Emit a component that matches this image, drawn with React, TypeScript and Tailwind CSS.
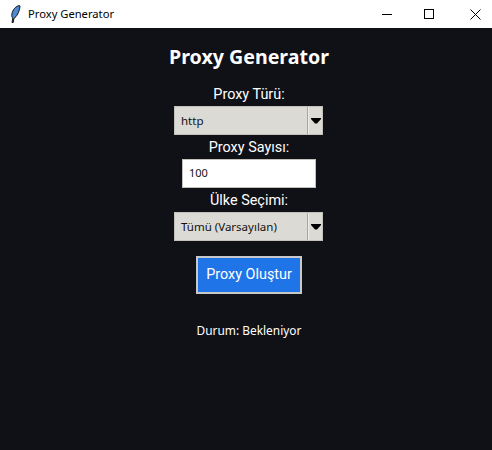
import React from "react";

function Combo({ text }: { text: string }) {
  return (
    <div className="flex h-[29px] w-[149px] border border-[#c4c1b8] bg-[#dcdad5]">
      <div className="flex flex-1 items-center border-r border-[#a9a69d] pl-[6px] text-[11.5px] text-[#111]">
        {text}
      </div>
      <div className="flex w-[14px] items-center justify-center border-l border-[#ecebe7]">
        <svg width="10" height="6" viewBox="0 0 10 6">
          <path d="M0 0H10V1L6 5.5H4L0 1Z" fill="#000" />
        </svg>
      </div>
    </div>
  );
}

export default function App() {
  return (
    <div className="flex h-[450px] w-[492px] flex-col overflow-hidden bg-[#0f1117] font-['Noto_Sans','Open_Sans',sans-serif]">
      <div className="flex h-7 shrink-0 items-center bg-white text-black">
        <svg className="ml-[10px]" width="11" height="18" viewBox="0 0 11 18">
          <path d="M9.5 0.5C6 1 2.5 4.5 1.8 9.5C1.6 11 2 12.5 2.8 13L2 17.5H3.2L4 13.2C6.5 12 9.5 7 10 1Z" fill="#4f8ad0" stroke="#111" strokeWidth="1" />
        </svg>
        <span className="ml-[7px] text-[11.2px]">Proxy Generator</span>
        <div className="ml-auto flex items-center">
          <svg className="mr-[32px]" width="10" height="10" viewBox="0 0 10 10">
            <path d="M0 5.5H10" stroke="#000" strokeWidth="1" />
          </svg>
          <svg className="mr-[36px]" width="10" height="10" viewBox="0 0 10 10">
            <rect x="0.5" y="0.5" width="9" height="9" fill="none" stroke="#000" strokeWidth="1" />
          </svg>
          <svg className="mr-[11px]" width="11" height="11" viewBox="0 0 11 11">
            <path d="M0.5 0.5L10.5 10.5M10.5 0.5L0.5 10.5" stroke="#000" strokeWidth="1" />
          </svg>
        </div>
      </div>
      <div className="flex flex-col items-center pl-[6px] text-white">
        <h1 className="mt-[14px] text-[19.6px] leading-[30px] font-bold">Proxy Generator</h1>
        <div className="mt-[13px] font-['Roboto',sans-serif] text-[14.4px] leading-[20px]">Proxy Türü:</div>
        <div className="mt-[1px] pr-[1px]"><Combo text="http" /></div>
        <div className="mt-[3px] font-['Roboto',sans-serif] text-[14.4px] leading-[20px]">Proxy Sayısı:</div>
        <div className="mt-[1px] flex h-[29px] w-[134px] items-center border border-[#c4c1b8] bg-white pl-[6px] text-[11px] text-[#111]">100</div>
        <div className="mt-[3px] font-['Roboto',sans-serif] text-[14.4px] leading-[20px]">Ülke Seçimi:</div>
        <div className="mt-[1px] pr-[1px]"><Combo text="Tümü (Varsayılan)" /></div>
        <button className="mt-[15px] h-[38px] w-[106px] border-2 border-[#c8c8c8] bg-[#1f74e8] font-['Roboto',sans-serif] text-[14.4px] text-white">Proxy Oluştur</button>
        <div className="mt-[27px] text-[11.9px] leading-[18px]">Durum: Bekleniyor</div>
      </div>
    </div>
  );
}
